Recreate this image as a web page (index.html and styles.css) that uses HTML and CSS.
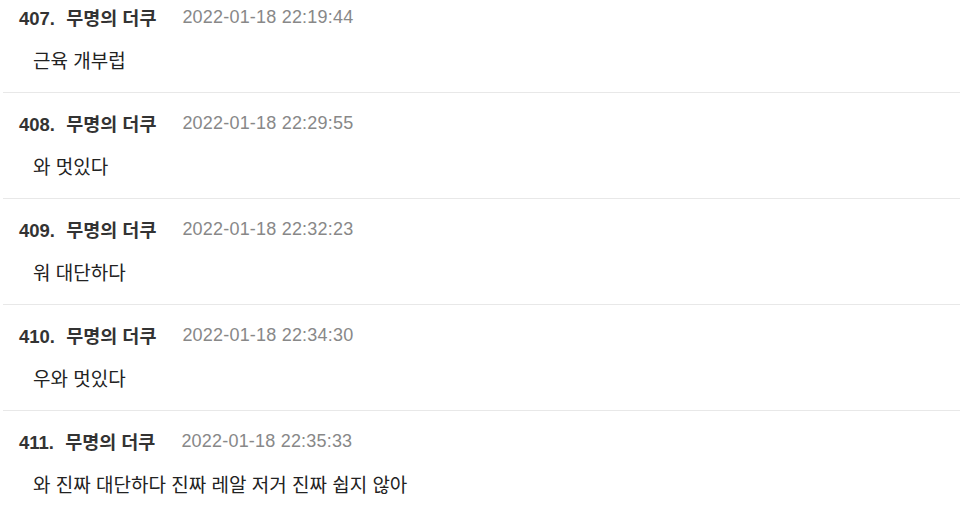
FILE: index.html
```html
<!DOCTYPE html>
<html lang="ko">

<head>
    <meta charset="UTF-8">
    <meta name="viewport" content="width=device-width, initial-scale=1.0">
    <title>댓글</title>
    <link rel="stylesheet" href="styles.css">
</head>

<body>
    <ul class="comments">
        <li class="comment">
            <div class="comment-head">
                <span class="comment-name"><span class="comment-num">407.</span> 무명의 더쿠</span>
                <span class="comment-date">2022-01-18 22:19:44</span>
            </div>
            <p class="comment-text">근육 개부럽</p>
        </li>
        <li class="comment">
            <div class="comment-head">
                <span class="comment-name"><span class="comment-num">408.</span> 무명의 더쿠</span>
                <span class="comment-date">2022-01-18 22:29:55</span>
            </div>
            <p class="comment-text">와 멋있다</p>
        </li>
        <li class="comment">
            <div class="comment-head">
                <span class="comment-name"><span class="comment-num">409.</span> 무명의 더쿠</span>
                <span class="comment-date">2022-01-18 22:32:23</span>
            </div>
            <p class="comment-text">워 대단하다</p>
        </li>
        <li class="comment">
            <div class="comment-head">
                <span class="comment-name"><span class="comment-num">410.</span> 무명의 더쿠</span>
                <span class="comment-date">2022-01-18 22:34:30</span>
            </div>
            <p class="comment-text">우와 멋있다</p>
        </li>
        <li class="comment">
            <div class="comment-head">
                <span class="comment-name"><span class="comment-num">411.</span> 무명의 더쿠</span>
                <span class="comment-date">2022-01-18 22:35:33</span>
            </div>
            <p class="comment-text">와 진짜 대단하다 진짜 레알 저거 진짜 쉽지 않아</p>
        </li>
    </ul>
</body>

</html>
```

FILE: styles.css
```css
body {
    margin: 0;
    background-color: #fff;
    color: #222;
    font-family: "Liberation Sans", "Noto Sans CJK KR", sans-serif;
    overflow: hidden;
}

.comments {
    list-style: none;
    margin: -14px 0 0 3px;
    padding: 0;
}

.comment {
    border-top: 1px solid #e8e8e8;
    padding: 18px 0 18px 16px;
}

.comment-head {
    display: flex;
    align-items: center;
    gap: 26px;
    height: 24px;
}

.comment-name {
    font-size: 18.5px;
    font-weight: bold;
    color: #333;
}

.comment-num {
    margin-right: 6px;
}

.comment-date {
    font-size: 18px;
    letter-spacing: 0.2px;
    color: #888;
}

.comment-text {
    margin: 21px 0 0 14px;
    font-size: 19px;
    line-height: 24px;
    color: #222;
}
```
